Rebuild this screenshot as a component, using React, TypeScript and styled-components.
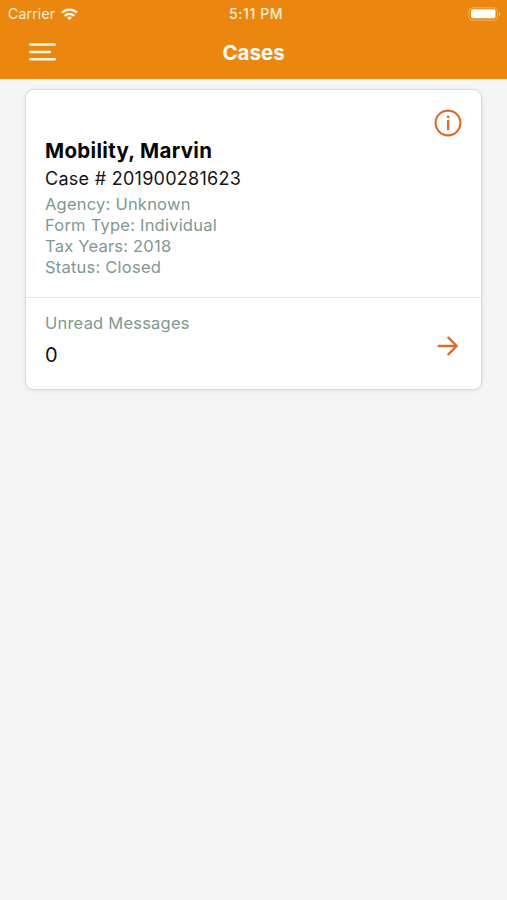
import React from "react";
import styled, { createGlobalStyle } from "styled-components";

const GlobalStyle = createGlobalStyle`
  * { box-sizing: border-box; }
  body { margin: 0; background: #f5f5f5; font-family: Inter, "Liberation Sans", sans-serif; }
`;

const Screen = styled.div`
  min-height: 900px;
  background: #f5f5f5;
`;

const Header = styled.header`
  height: 80px;
  background: #eb860f;
  border-bottom: 1px solid #fbeeda;
  color: #fff;
`;

const StatusBar = styled.div`
  display: grid;
  grid-template-columns: 1fr auto 1fr;
  align-items: center;
  height: 28px;
  padding: 0 6px 0 8px;
  color: #fff0d9;
`;

const Carrier = styled.div`
  display: flex;
  align-items: center;
  gap: 6px;
  font-size: 14px;
  line-height: 18px;
  letter-spacing: 0.2px;
`;

const Clock = styled.time`
  margin-left: 3px;
  font-size: 14px;
  font-weight: 500;
  line-height: 18px;
  letter-spacing: 0.6px;
`;

const BatterySlot = styled.div`
  display: flex;
  justify-content: flex-end;
`;

const NavBar = styled.div`
  display: grid;
  grid-template-columns: 1fr auto 1fr;
  align-items: center;
  height: 48px;
  padding: 0 28px;
`;

const MenuButton = styled.button`
  display: flex;
  width: 28px;
  padding: 0;
  border: 0;
  background: none;
`;

const Title = styled.h1`
  margin: 2px 0 0;
  font-size: 20.5px;
  line-height: 24px;
  font-weight: 700;
`;

const CaseCard = styled.article`
  width: 457px;
  height: 301px;
  margin: 9px 0 0 25px;
  border: 1px solid #d9dbdb;
  border-radius: 9px;
  background: #fff;
  box-shadow: 0 1px 5px rgba(0, 0, 0, 0.09);
`;

const CaseDetails = styled.section`
  display: flex;
  justify-content: space-between;
  height: 208px;
  padding: 19px 19px 0 19px;
  border-bottom: 1px solid #e9e9e9;
`;

const CaseText = styled.div`
  padding-top: 28px;
`;

const ClientName = styled.h2`
  margin: 0;
  font-size: 20.5px;
  line-height: 27px;
  font-weight: 700;
  letter-spacing: 0.32px;
  color: #050505;
`;

const CaseNumber = styled.p`
  margin: 2px 0 2px;
  font-size: 18px;
  line-height: 26px;
  letter-spacing: 0.27px;
  color: #161616;
`;

const Detail = styled.p`
  margin: 0;
  font-size: 16.5px;
  line-height: 20.9px;
  letter-spacing: 0.22px;
  color: #7d9990;
`;

const IconButton = styled.button`
  display: flex;
  align-self: flex-start;
  padding: 0;
  border: 0;
  background: none;
  color: #dc6b27;
`;

const Messages = styled.section`
  display: flex;
  justify-content: space-between;
  padding: 15px 22px 0 19px;
`;

const ArrowButton = styled(IconButton)`
  margin-top: 22px;
`;

const Count = styled.p`
  margin: 8px 0 0;
  font-size: 20px;
  line-height: 26px;
  color: #111;
`;

const details = ["Agency: Unknown", "Form Type: Individual", "Tax Years: 2018", "Status: Closed"];

const WifiIcon = () => (
  <svg width="17" height="13" viewBox="0 0 18 13" fill="none" stroke="#fff8ec" strokeWidth="2.5">
    <path d="M1 4.6a11.5 11.5 0 0 1 16 0" />
    <path d="M4 7.9a7.2 7.2 0 0 1 10 0" />
    <path d="M9 12.6 6.4 10a3.7 3.7 0 0 1 5.2 0Z" fill="#fff8ec" stroke="none" />
  </svg>
);

const BatteryIcon = () => (
  <svg width="33" height="14" viewBox="0 0 33 14" fill="none">
    <rect x="1" y="0.8" width="28.5" height="12.4" rx="3.4" stroke="#f3b165" />
    <rect x="3" y="2.3" width="24.5" height="9" rx="1.7" fill="#fff" />
    <path d="M31 5v4.2c1.7-.6 1.7-3.6 0-4.2Z" fill="#f8c78e" />
  </svg>
);

export default function App() {
  return (
    <Screen>
      <GlobalStyle />
      <Header>
        <StatusBar>
          <Carrier>Carrier <WifiIcon /></Carrier>
          <Clock>5:11 PM</Clock>
          <BatterySlot><BatteryIcon /></BatterySlot>
        </StatusBar>
        <NavBar>
          <MenuButton aria-label="Menu">
            <svg width="28" height="20" viewBox="0 0 28 20" stroke="#fff6e7" strokeWidth="2.5" strokeLinecap="round">
              <path d="M2.2 2.6h24.6M2.2 9.9h19.6M2.2 17.2h24.6" />
            </svg>
          </MenuButton>
          <Title>Cases</Title>
        </NavBar>
      </Header>
      <CaseCard>
        <CaseDetails>
          <CaseText>
            <ClientName>Mobility, Marvin</ClientName>
            <CaseNumber>Case # 201900281623</CaseNumber>
            {details.map((detail) => <Detail key={detail}>{detail}</Detail>)}
          </CaseText>
          <IconButton aria-label="Case information">
            <svg width="28" height="28" viewBox="0 0 28 28" fill="none" stroke="currentColor">
              <circle cx="14" cy="14" r="12.4" strokeWidth="2.1" />
              <path d="M14.2 11v10.2" strokeWidth="2.3" />
              <circle cx="14.2" cy="7.8" r="1.4" fill="currentColor" stroke="none" />
            </svg>
          </IconButton>
        </CaseDetails>
        <Messages>
          <div>
            <Detail>Unread Messages</Detail>
            <Count>0</Count>
          </div>
          <ArrowButton aria-label="Open messages">
            <svg width="22" height="22" viewBox="0 0 22 22" fill="none" stroke="currentColor" strokeWidth="2.4" strokeLinecap="round" strokeLinejoin="round">
              <path d="M1.7 11h18M11.4 2.7l8.3 8.3-8.3 8.3" />
            </svg>
          </ArrowButton>
        </Messages>
      </CaseCard>
    </Screen>
  );
}
